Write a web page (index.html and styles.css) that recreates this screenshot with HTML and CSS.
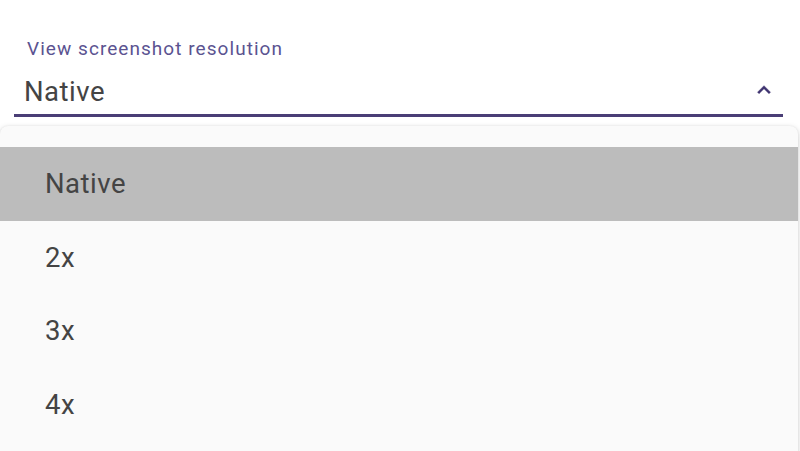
FILE: index.html
```html
<!DOCTYPE html>
<html>
<head>
<meta charset="utf-8">
<link rel="stylesheet" href="styles.css">
</head>
<body>
<div class="field">
  <div class="label">View screenshot resolution</div>
  <div class="value-row">
    <span class="value">Native</span>
    <svg class="chevron" viewBox="0 0 24 24" width="26" height="26"><path d="M12 8l-6 6 1.41 1.41L12 10.83l4.59 4.58L18 14z" fill="#3f3470" stroke="#3f3470" stroke-width="0.4"/></svg>
  </div>
</div>
<div class="menu">
  <div class="item selected">Native</div>
  <div class="item">2x</div>
  <div class="item">3x</div>
  <div class="item">4x</div>
</div>
</body>
</html>
```

FILE: styles.css
```css
html, body {
  margin: 0;
  padding: 0;
  background: #ffffff;
  font-family: Roboto, "Liberation Sans", sans-serif;
  overflow: hidden;
  height: 451px;
}
.field {
  margin: 0 17px 0 14px;
  padding-top: 38px;
  border-bottom: 3px solid #4a3e76;
}
.label {
  padding-left: 13px;
  font-size: 19px;
  line-height: 22px;
  letter-spacing: 1.05px;
  color: #5b5391;
}
.value-row {
  margin-top: 16px;
  padding: 0 6px 6px 10px;
  height: 32px;
  display: flex;
  align-items: center;
  justify-content: space-between;
}
.value {
  font-size: 27.5px;
  line-height: 32px;
  letter-spacing: 0.5px;
  color: #444444;
}
.chevron {
  margin-bottom: 4px;
}
.menu {
  position: absolute;
  top: 126px;
  left: 0;
  right: 2px;
  height: 340px;
  background: #fafafa;
  border-radius: 8px;
  box-shadow: 0 2px 6px rgba(0, 0, 0, 0.18), 0 0 2px rgba(0, 0, 0, 0.08);
  padding-top: 21px;
  box-sizing: border-box;
}
.item {
  height: 73.5px;
  display: flex;
  align-items: center;
  padding-left: 45px;
  font-size: 27.5px;
  letter-spacing: 0.5px;
  color: #444444;
}
.item.selected {
  background: #bcbcbc;
}
```
